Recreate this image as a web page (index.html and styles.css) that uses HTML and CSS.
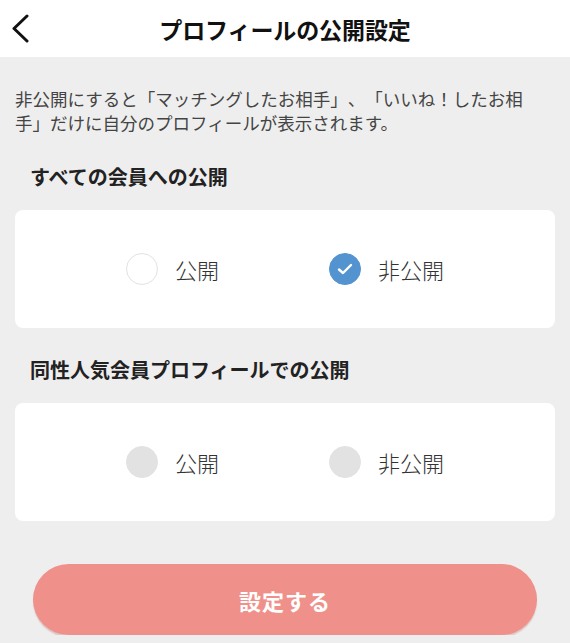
FILE: index.html
```html
<!doctype html>
<html lang="ja">
<head>
	<meta charset="UTF-8">
	<meta name="viewport" content="width=device-width, initial-scale=1.0">
	<title>プロフィールの公開設定</title>
	<link rel="stylesheet" href="styles.css">
</head>
<body>
	<div class='header'>
		<a class='back' href='#'>
			<svg width="20" height="30" viewBox="0 0 20 30">
				<polyline points="16,2 3,14.5 16,27" fill="none" stroke="#111" stroke-width="3" stroke-linecap="round" stroke-linejoin="round"/>
			</svg>
		</a>
		<h1>プロフィールの公開設定</h1>
		<span></span>
	</div>
	<div class='main'>
		<p class='desc'>非公開にすると「マッチングしたお相手」、「いいね！したお相手」だけに自分のプロフィールが表示されます。</p>

		<h2>すべての会員への公開</h2>
		<div class='card'>
			<label class='option'>
				<span class='radio'></span>
				<span>公開</span>
			</label>
			<label class='option'>
				<span class='radio checked'>
					<svg width="16" height="12" viewBox="0 0 16 12">
						<polyline points="2,6.5 6,10 14,2" fill="none" stroke="#fff" stroke-width="2.4" stroke-linecap="round" stroke-linejoin="round"/>
					</svg>
				</span>
				<span>非公開</span>
			</label>
		</div>

		<h2>同性人気会員プロフィールでの公開</h2>
		<div class='card'>
			<label class='option'>
				<span class='radio disabled'></span>
				<span>公開</span>
			</label>
			<label class='option'>
				<span class='radio disabled'></span>
				<span>非公開</span>
			</label>
		</div>

		<button type="button" class='submit'>設定する</button>
	</div>
</body>
</html>
```

FILE: styles.css
```css
* {
	padding: 0;
	margin: 0;
	box-sizing: border-box;
}
body {
	background-color: #eeeeee;
	font-family: "Noto Sans CJK JP", "Noto Sans", sans-serif;
	color: #222;
	text-spacing-trim: space-all;
}
.header {
	height: 57px;
	background-color: #fff;
	display: grid;
	grid-template-columns: 1fr auto 1fr;
	align-items: center;
}
.back {
	display: flex;
	align-items: center;
	padding-left: 11px;
	padding-top: 1px;
}
.header h1 {
	font-size: 23px;
	font-weight: bold;
	color: #111;
	letter-spacing: -0.1px;
}
.main {
	padding: 0 15px;
}
.desc {
	margin-top: 30px;
	padding-right: 20px;
	font-size: 17.5px;
	line-height: 24px;
	color: #444;
}
h2 {
	margin: 28px 0 19px;
	padding-left: 15px;
	font-size: 20px;
	line-height: 28px;
	font-weight: bold;
	color: #222;
}
.card {
	height: 118px;
	background-color: #fff;
	border-radius: 8px;
	display: flex;
	justify-content: center;
	align-items: center;
	gap: 110px;
}
.option {
	display: flex;
	align-items: center;
	gap: 17px;
	font-size: 22px;
	color: #333;
	font-weight: 300;
}
.radio {
	width: 32px;
	height: 32px;
	border-radius: 50%;
	border: 1.5px solid #e2e2e2;
	display: flex;
	align-items: center;
	justify-content: center;
}
.radio.checked {
	background-color: #5393d0;
	border-color: #5393d0;
}
.radio.disabled {
	background-color: #e2e2e2;
}
.submit {
	display: block;
	margin: 43px 18px 0;
	width: calc(100% - 36px);
	height: 71px;
	border: none;
	border-radius: 36px;
	background-color: #ef918a;
	box-shadow: 0 2px 1px rgba(180, 80, 70, 0.25);
	color: #fff;
	font-family: inherit;
	font-size: 22px;
	font-weight: bold;
	letter-spacing: 1px;
}
```
